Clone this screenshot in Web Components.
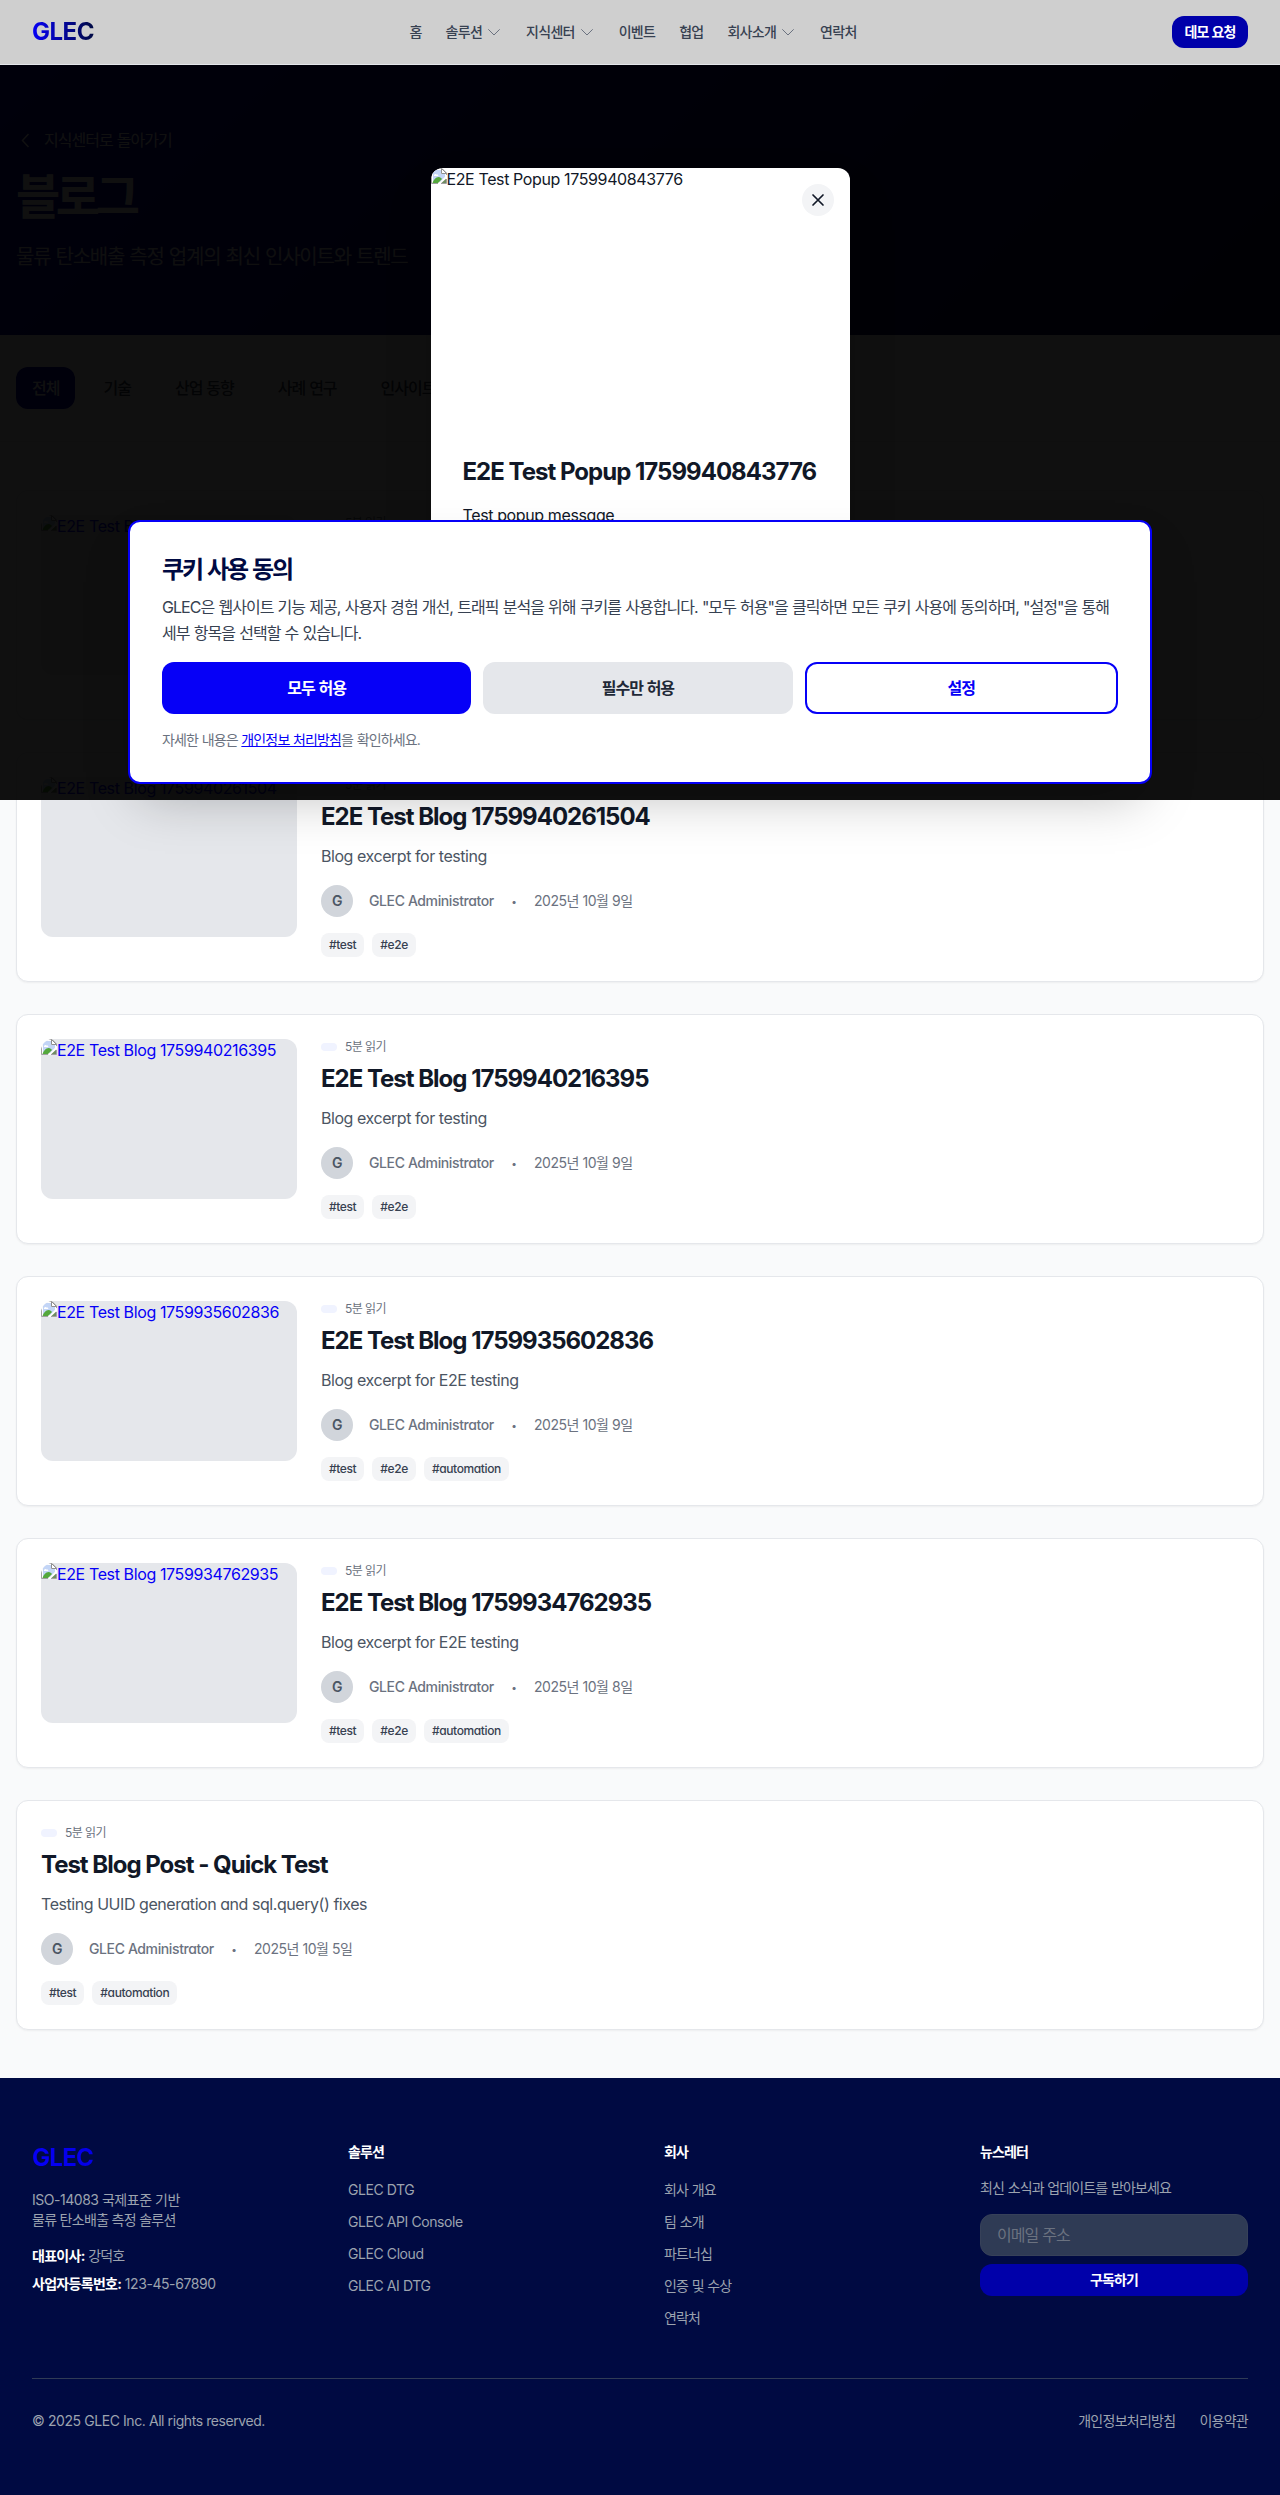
<!DOCTYPE html>
<html lang="ko">
<head>
<meta charset="utf-8">
<title>GLEC 블로그</title>
<style>
body{margin:0;background:#f9fafb;color:#111827;font:400 16px/24px Inter,"Noto Sans CJK KR",sans-serif;font-feature-settings:"cv11";letter-spacing:-.024em;--blue:#0600f7;--navy:#000a42;--deep:#0000aa}
</style>
</head>
<body>
<glec-page></glec-page>
<script>
const base = `*{box-sizing:border-box}h1,h2,h3,p,ul{margin:0;padding:0}a{color:inherit;text-decoration:none}button,input{font:inherit;font-feature-settings:inherit;letter-spacing:inherit;border:0;margin:0}.k{letter-spacing:-.062em;word-spacing:.04em}`;
function define(name, css, html) {
  customElements.define(name, class extends HTMLElement {
    connectedCallback() {
      if (this.shadowRoot) return;
      const t = document.createElement('template');
      t.innerHTML = `<style>${base}${css}</style>${typeof html === 'function' ? html(this) : html}`;
      this.attachShadow({mode: 'open'}).append(t.content.cloneNode(true));
    }
  });
}
define('nav-item', `
:host{display:flex;align-items:center;gap:4px;font:500 14px/20px Inter,"Noto Sans CJK KR",sans-serif;color:#374151;white-space:nowrap}
span{letter-spacing:-.052em}
svg{width:16px;height:16px;display:block}`,
el => `<span><slot></slot></span>${el.hasAttribute('menu') ? '<svg viewBox="0 0 16 16" fill="none" stroke="#6b7280" stroke-width="1"><path d="M2.300 5.300 8 11l5.700-5.700"/></svg>' : ''}`);

define('site-header', `
:host{display:block;background:#cfcfcf;border-bottom:1px solid #e5e7eb}
.bar{height:64px;padding:0 32px;display:flex;justify-content:space-between;align-items:center}
.logo{font-size:24px;line-height:32px;font-weight:700;background:linear-gradient(90deg,var(--blue),var(--navy));-webkit-background-clip:text;background-clip:text;color:transparent;letter-spacing:-.02em}
nav{display:flex;gap:24px}
.demo{width:76px;height:32px;padding:0;border-radius:12px;background:var(--deep);color:#fff;font-weight:700;font-size:14px;line-height:20px;white-space:nowrap}`,
`<div class="bar"><div class="logo">GLEC</div>
<nav><nav-item>홈</nav-item><nav-item menu>솔루션</nav-item><nav-item menu>지식센터</nav-item><nav-item>이벤트</nav-item><nav-item>협업</nav-item><nav-item menu>회사소개</nav-item><nav-item>연락처</nav-item></nav>
<button class="demo k">데모 요청</button></div>`);

define('page-hero', `
:host{display:block;background:linear-gradient(135deg,#0000aa,#000a42);color:#fff;padding:64px 16px}
.back{display:flex;align-items:center;gap:8px;height:22px}
svg{width:20px;height:20px}
h1{margin-top:16px;font-size:48px;line-height:60px;font-weight:700;letter-spacing:-.09em}
p{margin-top:16px;font-size:20px;line-height:28px;color:#e5e7eb}`,
`<a class="back"><svg viewBox="0 0 20 20" fill="none" stroke="currentColor" stroke-width="1.500"><path d="M12.500 4 6.500 10.500l6 6.500"/></svg><span class="k">지식센터로 돌아가기</span></a>
<h1>블로그</h1><p class="k">물류 탄소배출 측정 업계의 최신 인사이트와 트렌드</p>`);

define('category-tabs', `
:host{display:flex;gap:12px;padding:32px 16px;background:#fff;border-bottom:1px solid #e5e7eb}
button{height:42px;padding:0 16px;border-radius:12px;background:transparent;color:#374151;font-weight:500;font-size:16px;white-space:nowrap}
.on{background:var(--deep);color:#fff}`,
`<button class="on k">전체</button><button class="k">기술</button><button class="k">산업 동향</button><button class="k">사례 연구</button><button class="k">인사이트</button>`);

define('missing-image', `
:host{display:block;overflow:hidden;color:#0600f7;line-height:24px;white-space:nowrap}
.row{display:flex;align-items:flex-start}
svg{width:16px;height:16px;flex:none}
.alt{line-height:22px}`,
`<div class="row"><svg viewBox="0 0 16 16"><path d="M1 1h9.500L15 5.500V15H1z" fill="#fff"/><path d="M2 2h8v4h4v8H2z" fill="#c3d5f6"/><path d="M3 7.500c0-1.700 2-2.100 2.500-1 1.300-.4 2 .3 1.800 1.500H3z" fill="#fff"/><path d="M1.500 15c1-3 3.500-6 6-6 2 0 2.500 1 3.500 2L7 15z" fill="#54a83c"/><path d="M15 9 8.500 15H15z" fill="#6f8c62"/><path d="M16 6.800 7 16h2.400L16 9.800z" fill="#fff"/><path d="M.5 15.500V.5H11L15.500 5v2M.5 15.500H7m3 0h5.500V11" fill="none" stroke="#a0a0a0"/><path d="M10.500.5v5h5z" fill="#fff" stroke="#909090"/></svg><span class="alt"><slot></slot></span></div>`);

define('blog-card', `
:host{display:flex;align-items:flex-start;gap:24px;min-height:230px;padding:24px;border:1px solid #e5e7eb;border-radius:12px;background:#fff;box-shadow:0 1px 2px rgba(0,0,0,.05)}
missing-image{flex:none;width:256px;height:160px;border-radius:12px;background:#e5e7eb}
.meta{display:flex;align-items:center;gap:8px;height:16px;font-size:12px;line-height:16px;color:#6b7280;letter-spacing:-.045em}
.badge{width:16px;height:8px;border-radius:4px;background:#f0f3ff}
h2{margin-top:8px;font-size:24px;line-height:32px;font-weight:700;letter-spacing:-.042em;color:#111827}
p{margin-top:11px;color:#4b5563;letter-spacing:-.028em}
.author{margin-top:17px;display:flex;align-items:center;gap:16px;font-size:14px;line-height:20px;color:#6b7280}
.av{width:32px;height:32px;border-radius:50%;background:#d1d5db;color:#4b5563;display:grid;place-items:center;font-weight:600}
.name{font-weight:500}.dot{width:8px;font-size:10px;text-align:center}.date{letter-spacing:-.032em}
.tags{margin-top:16px;display:flex;gap:8px}
.tag{padding:4px 8px;border-radius:8px;background:#f3f4f6;color:#374151;font-size:12px;line-height:16px;font-weight:500}`,
el => {
  const a = n => el.getAttribute(n);
  return `${a('image') ? `<missing-image>${a('image')}</missing-image>` : ''}<div><div class="meta"><i class="badge"></i><span>5분 읽기</span></div>${a('heading') ? `<h2>${a('heading')}</h2><p>${a('excerpt')}</p><div class="author"><span class="av">G</span><span class="name">GLEC Administrator</span><span class="dot">•</span><span class="date">${a('date')}</span></div><div class="tags">${a('tags').split(' ').map(t => `<span class="tag">#${t}</span>`).join('')}</div>` : ''}</div>`;
});

define('blog-list', `:host{display:flex;flex-direction:column;gap:32px;padding:48px 16px}`, `
<blog-card image="E2E Test Blog"></blog-card>
<blog-card image="E2E Test Blog 1759940261504" heading="E2E Test Blog 1759940261504" excerpt="Blog excerpt for testing" date="2025년 10월 9일" tags="test e2e"></blog-card>
<blog-card image="E2E Test Blog 1759940216395" heading="E2E Test Blog 1759940216395" excerpt="Blog excerpt for testing" date="2025년 10월 9일" tags="test e2e"></blog-card>
<blog-card image="E2E Test Blog 1759935602836" heading="E2E Test Blog 1759935602836" excerpt="Blog excerpt for E2E testing" date="2025년 10월 9일" tags="test e2e automation"></blog-card>
<blog-card image="E2E Test Blog 1759934762935" heading="E2E Test Blog 1759934762935" excerpt="Blog excerpt for E2E testing" date="2025년 10월 8일" tags="test e2e automation"></blog-card>
<blog-card heading="Test Blog Post - Quick Test" excerpt="Testing UUID generation and sql.query() fixes" date="2025년 10월 5일" tags="test automation"></blog-card>`);

define('link-column', `
:host{display:block}
h3{font-size:14px;line-height:20px;font-weight:700;color:#fff}
.links{margin-top:16px;display:flex;flex-direction:column;gap:8px;line-height:24px}`,
el => `<h3 class="k">${el.getAttribute('heading')}</h3><div class="links">${el.getAttribute('items').split('|').map(t => `<a class="${/[가-힣]/.test(t) ? 'k' : ''}">${t}</a>`).join('')}</div>`);

define('site-footer', `
:host{display:block;background:var(--navy);color:#9ca3af;padding:64px 32px;font-size:14px;line-height:20px;letter-spacing:-.03em}
.grid{display:grid;grid-template-columns:repeat(4,1fr);gap:48px;padding-bottom:48px;border-bottom:1px solid #2f3b55}
.logo{font-size:24px;line-height:32px;font-weight:700;background:linear-gradient(90deg,var(--blue),var(--deep));-webkit-background-clip:text;background-clip:text;color:transparent;letter-spacing:-.03em}
.about{margin-top:16px}.fact{margin-top:8px}.about+.fact{margin-top:16px}
.iso{letter-spacing:-.034em}.tan,.fact b{letter-spacing:-.05em}
b,h3{color:#fff;font-weight:700}h3{font-size:14px;line-height:20px}
.news p{margin-top:16px}
input{display:block;width:100%;height:42px;margin-top:16px;padding:0 16px;border:1px solid #374159;border-radius:12px;background:#2f3b55;font-size:16px}
input::placeholder{color:#6b7280;opacity:1}
button{display:block;width:100%;height:32px;margin-top:8px;border-radius:12px;background:var(--deep);color:#fff;font-weight:700;line-height:20px}
.bottom{display:flex;justify-content:space-between;padding-top:32px}
.legal{display:flex;gap:24px}.legal.k{letter-spacing:-.052em}`,
`<div class="grid"><div><div class="logo">GLEC</div><p class="about"><span class="iso">ISO-14083 국제표준 기반</span><br><span class="tan">물류 탄소배출 측정 솔루션</span></p><p class="fact k"><b>대표이사:</b> 강덕호</p><p class="fact"><b>사업자등록번호:</b> 123-45-67890</p></div>
<link-column heading="솔루션" items="GLEC DTG|GLEC API Console|GLEC Cloud|GLEC AI DTG"></link-column>
<link-column heading="회사" items="회사 개요|팀 소개|파트너십|인증 및 수상|연락처"></link-column>
<div class="news"><h3 class="k">뉴스레터</h3><p class="k">최신 소식과 업데이트를 받아보세요</p><input class="k" placeholder="이메일 주소"><button class="k">구독하기</button></div></div>
<div class="bottom"><span>© 2025 GLEC Inc. All rights reserved.</span><div class="legal k"><a>개인정보처리방침</a><a>이용약관</a></div></div>`);

define('promo-popup', `
:host{position:absolute;top:168px;left:0;right:0;margin:auto;width:419px;height:400px;border-radius:12px;background:#fff;overflow:hidden;box-shadow:0 25px 50px -12px rgba(0,0,0,.25)}
missing-image{height:256px;color:#111827}
.body{padding:32px}
h2{font-size:24px;line-height:32px;letter-spacing:-.041em;white-space:nowrap}
p{margin-top:15px;color:#111827}
.close{position:absolute;top:16px;right:16px;width:32px;height:32px;border-radius:50%;background:#f3f4f6;display:grid;place-items:center;padding:0}
svg{width:20px;height:20px}`,
`<missing-image>E2E Test Popup 1759940843776</missing-image><div class="body"><h2>E2E Test Popup 1759940843776</h2><p>Test popup message</p></div>
<button class="close" aria-label="닫기"><svg viewBox="0 0 20 20" stroke="#111827" stroke-width="1.700" stroke-linecap="round"><path d="m5 5 10 10M15 5 5 15"/></svg></button>`);

define('cookie-consent', `
:host{position:absolute;top:520px;left:128px;right:128px;height:264px;padding:32px;border:2px solid var(--blue);border-radius:12px;background:#fff;box-shadow:0 25px 50px -12px rgba(0,0,0,.25)}
h2{font-size:24px;line-height:32px;font-weight:700;color:var(--navy);letter-spacing:-.09em;word-spacing:.07em}
.text{margin-top:8px;line-height:26px;color:#374151;letter-spacing:-.06em;word-spacing:.04em;white-space:nowrap}
.acts{margin-top:16px;display:flex;gap:12px}
button{flex:none;width:309.3px;height:52px;border-radius:12px;font-weight:600;font-size:16px;padding:0}
.all{background:var(--blue);color:#fff}.need{background:#e5e7eb;color:#1f2937}
.set{flex:1;background:#fff;border:2px solid var(--blue);color:var(--blue)}
.more{margin-top:16px;font-size:14px;line-height:20px;color:#6b7280}
.more a{color:var(--blue);text-decoration:underline}`,
`<h2>쿠키 사용 동의</h2><p class="text">GLEC은 웹사이트 기능 제공, 사용자 경험 개선, 트래픽 분석을 위해 쿠키를 사용합니다. "모두 허용"을 클릭하면 모든 쿠키 사용에 동의하며, "설정"을 통해<br>세부 항목을 선택할 수 있습니다.</p>
<div class="acts"><button class="all k">모두 허용</button><button class="need k">필수만 허용</button><button class="set k">설정</button></div>
<p class="more k">자세한 내용은 <a>개인정보 처리방침</a>을 확인하세요.</p>`);

define('glec-page', `
:host{display:block;position:relative}
.shade{position:absolute;top:65px;left:0;right:0;height:735px;background:rgba(0,0,0,.9375)}`,
`<site-header></site-header><main><page-hero></page-hero><category-tabs></category-tabs><blog-list></blog-list></main><site-footer></site-footer>
<div class="shade"></div><promo-popup></promo-popup><cookie-consent></cookie-consent>`);
</script>
</body>
</html>
